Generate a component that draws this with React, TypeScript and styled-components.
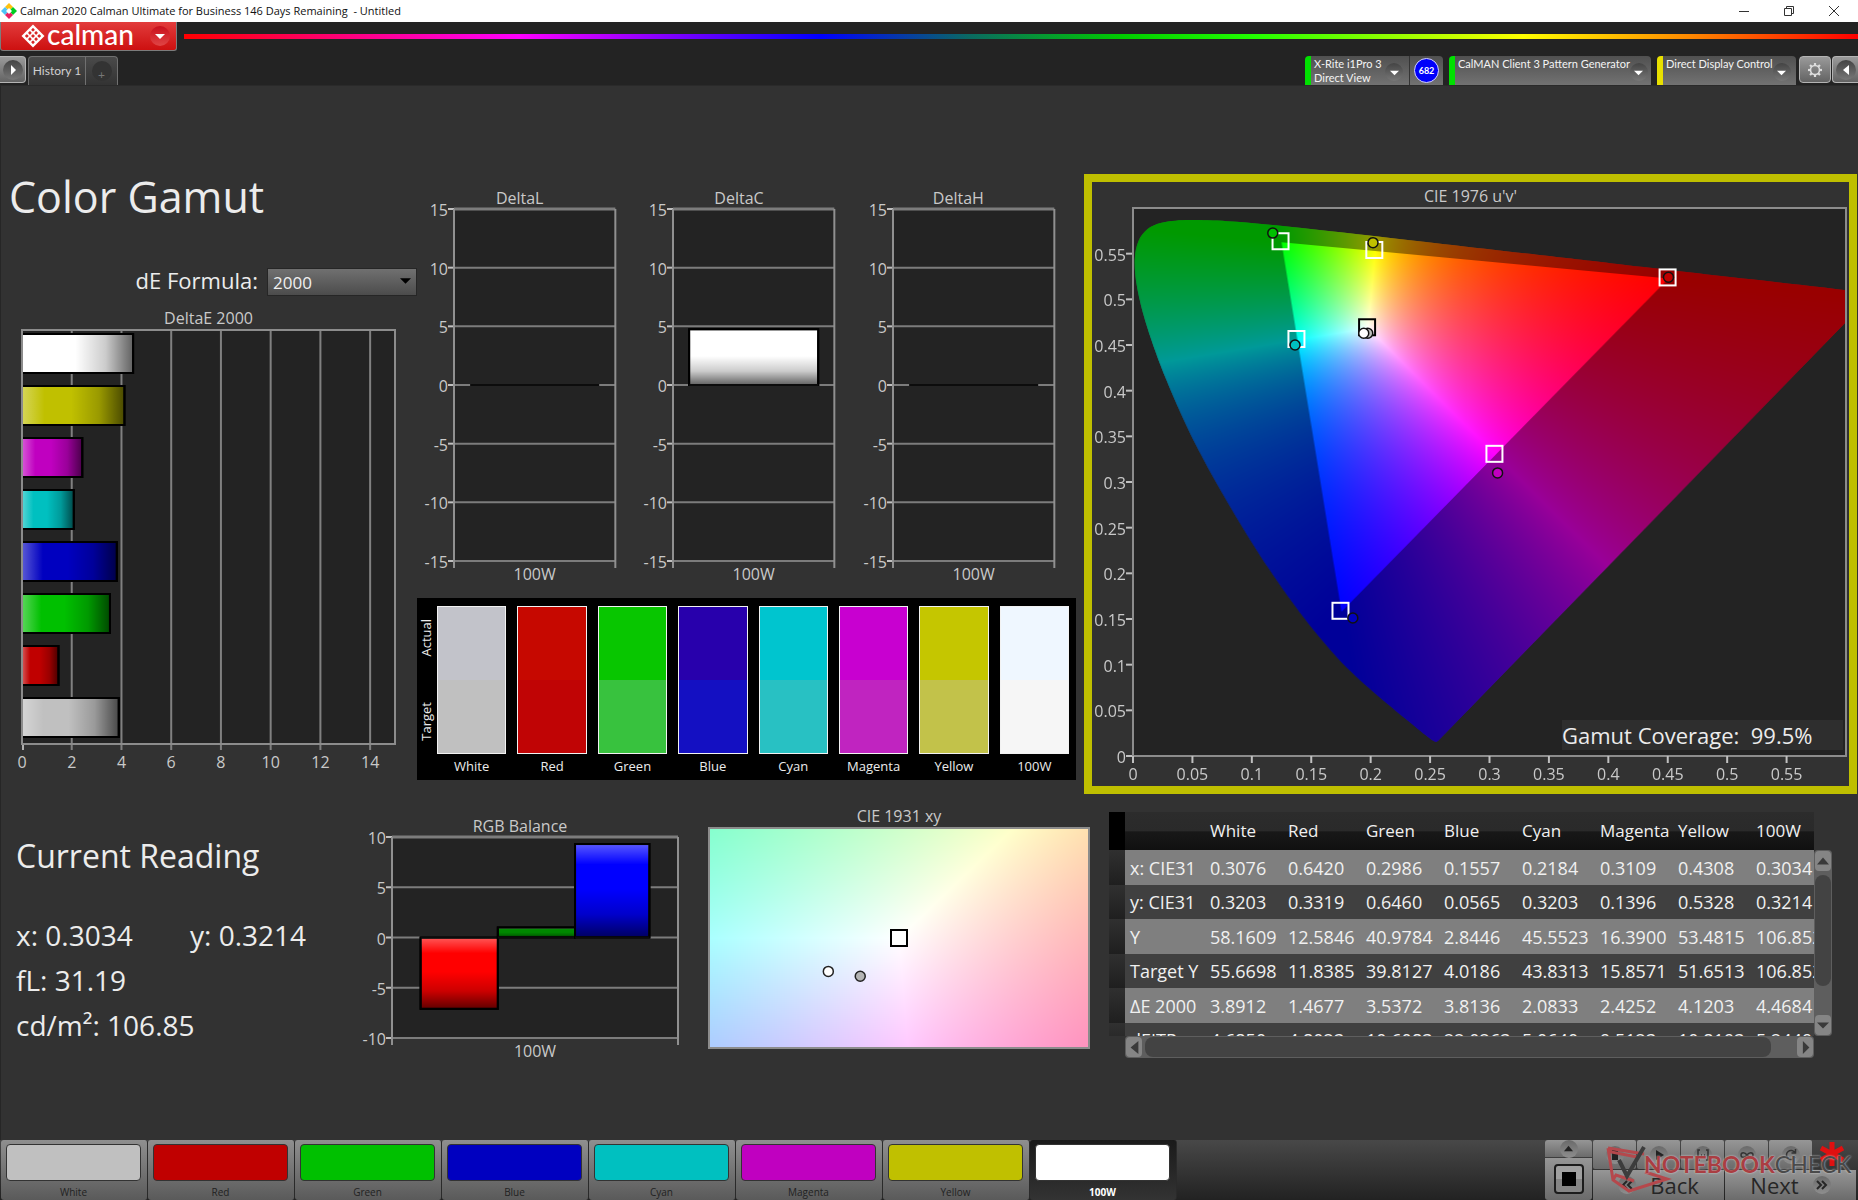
import React, { useEffect, useRef } from "react";
import styled, { createGlobalStyle, css } from "styled-components";

const sans = `"Open Sans", "Noto Sans", sans-serif`;
const ui = `Lato, "Open Sans", sans-serif`;

const GlobalStyle = createGlobalStyle`
  *, *::before, *::after { box-sizing: border-box; }
  body { margin: 0; background: #232323; color: #ececec; font-family: ${sans}; }
  button, select, input { font-family: inherit; }
  button { padding: 0; margin: 0; border: 0; cursor: pointer; }
`;

/* ---------- colour maths ---------- */

type Pt = [number, number];

const toUv = ([x, y]: Pt): Pt => {
  const d = -2 * x + 12 * y + 3;
  return [(4 * x) / d, (9 * y) / d];
};
const toXy = ([u, v]: Pt): Pt => {
  const d = 6 * u - 16 * v + 12;
  return [(9 * u) / d, (4 * v) / d];
};

const xyToRgb = ([x, y]: Pt): [number, number, number] => {
  const X = x / Math.max(y, 0.0001);
  const Z = (1 - x - y) / Math.max(y, 0.0001);
  const r = Math.max(0, 3.2406 * X - 1.5372 - 0.4986 * Z);
  const g = Math.max(0, -0.9689 * X + 1.8758 + 0.0415 * Z);
  const b = Math.max(0, 0.0557 * X - 0.204 + 1.057 * Z);
  const m = Math.max(r, g, b, 0.0001) / 255;
  return [r / m, g / m, b / m];
};

const locus: Pt[] = [
  [0.1741, 0.005], [0.1714, 0.0051], [0.1644, 0.0109], [0.1566, 0.0177], [0.144, 0.0297],
  [0.1355, 0.0399], [0.1241, 0.0578], [0.1096, 0.0868], [0.0913, 0.1327], [0.0687, 0.2007],
  [0.0454, 0.295], [0.0235, 0.4127], [0.0082, 0.5384], [0.0039, 0.6548], [0.0139, 0.7502],
  [0.0389, 0.812], [0.0743, 0.8338], [0.1142, 0.8262], [0.1547, 0.8059], [0.2296, 0.7543],
  [0.3016, 0.6923], [0.3731, 0.6245], [0.4441, 0.5547], [0.5125, 0.4866], [0.5752, 0.4242],
  [0.627, 0.3725], [0.6915, 0.3083], [0.7347, 0.2653],
];

const primaries: Pt[] = [[0.64, 0.33], [0.3, 0.6], [0.15, 0.06]];

const field = (w: number, h: number, at: (fx: number, fy: number) => Pt) => {
  const c = document.createElement("canvas");
  c.width = w;
  c.height = h;
  const ctx = c.getContext("2d")!;
  const img = ctx.createImageData(w, h);
  for (let j = 0; j < h; j++) {
    for (let i = 0; i < w; i++) {
      const rgb = xyToRgb(at((i + 0.5) / w, 1 - (j + 0.5) / h));
      const o = (j * w + i) * 4;
      img.data[o] = rgb[0];
      img.data[o + 1] = rgb[1];
      img.data[o + 2] = rgb[2];
      img.data[o + 3] = 255;
    }
  }
  ctx.putImageData(img, 0, 0);
  return c;
};

/* ---------- title bar and ribbon ---------- */

const Page = styled.div`
  min-height: 100vh;
  display: flex;
  flex-direction: column;
  overflow: hidden;
`;

const TitleBar = styled.header`
  height: 22px;
  display: flex;
  align-items: center;
  gap: 3px;
  padding-left: 1px;
  background: #fff;
  color: #111;
  font: 11px/22px ${sans};
  white-space: pre;
`;

const WindowButtons = styled.div`
  margin-left: auto;
  padding-right: 2px;
  display: flex;
`;

const WindowButton = styled.button`
  width: 45px;
  height: 22px;
  background: transparent;
  display: grid;
  place-items: center;
`;

const Brand = styled.div`
  display: flex;
  align-items: flex-start;
  gap: 7px;
  height: 34px;
`;

const BrandButton = styled.button`
  width: 177px;
  height: 29px;
  display: flex;
  align-items: center;
  padding: 0 6px 0 20px;
  gap: 2px;
  border: solid #7c7c7c;
  border-width: 0 1px 1px;
  border-radius: 0 0 3px 3px;
  background: linear-gradient(#e23c3c, #cd1010);
  color: #fff;
  font: 500 28px/22px ${ui};
`;

const BrandName = styled.span`
  height: 27px;
  flex: 1;
  text-align: left;
`;

const Spectrum = styled.div`
  flex: 1;
  height: 5px;
  margin-top: 12px;
  background: linear-gradient(90deg, #f00 0%, #f0f 20%, #00f 38%, #0a6a60 47%, #0c0 56%, #2f0 64%, #ff0 80%, #f80 90%, #f00 100%);
`;

const TabStrip = styled.nav`
  height: 29px;
  display: flex;
  align-items: stretch;
`;

const Tabs = styled.div`
  display: flex;
  margin-left: 2px;
`;

const Round = styled.span<{ $size: number; $dim?: boolean }>`
  width: ${(p) => p.$size}px;
  height: ${(p) => p.$size}px;
  flex: none;
  border-radius: 50%;
  display: grid;
  place-items: center;
  color: ${(p) => (p.$dim ? "#777" : "#fff")};
  background: ${(p) => (p.$dim ? "#333" : "linear-gradient(#444, #777)")};
`;

const RedRound = styled(Round)`
  background: linear-gradient(#c80f1c, #e04545);
`;

const SideButton = styled.button<{ $edge: "left" | "right" | "none" }>`
  width: ${(p) => (p.$edge === "none" ? 32 : 26)}px;
  height: 27px;
  display: flex;
  align-items: center;
  justify-content: center;
  border: 1px solid #b4b4b4;
  border-radius: ${(p) => (p.$edge === "left" ? "0 4px 4px 0" : p.$edge === "right" ? "4px 0 0 4px" : "4px")};
  ${(p) => p.$edge === "left" && css`border-left: 0;`}
  ${(p) => p.$edge === "right" && css`border-right: 0;`}
  background: linear-gradient(#9a9a9a, #636363);
`;

const Tab = styled.button<{ $w: number; $last?: boolean }>`
  width: ${(p) => p.$w}px;
  border: solid #707070;
  border-width: 1px 1px 0 ${(p) => (p.$last ? 0 : 1)}px;
  border-radius: ${(p) => (p.$last ? "0 4px 0 0" : "4px 0 0 0")};
  background: linear-gradient(#4a4a4a, #333);
  color: #d0d0d0;
  font: 12px/28px ${ui};
  display: grid;
  place-items: center;
`;

const Devices = styled.div`
  margin-left: auto;
  display: flex;
  gap: 6px;
`;

const Device = styled.div<{ $w: number; $mark: string }>`
  width: ${(p) => p.$w}px;
  display: flex;
  align-items: center;
  border-left: 6px solid ${(p) => p.$mark};
  border-radius: 4px 4px 0 0;
  background: linear-gradient(#505050, #727272);
  font: 11px/14px ${ui};
  color: #f4f4f4;
`;

const DeviceName = styled.span`
  flex: 1;
  align-self: flex-start;
  padding: 1px 0 0 3px;
  white-space: nowrap;
`;

const DeviceMenu = styled.button`
  align-self: flex-end;
  margin: 0 6px 4px 0;
  background: none;
  border-radius: 50%;
`;

const MeterCell = styled.span`
  height: 100%;
  width: 34px;
  display: grid;
  place-items: center;
  border-left: 1px solid #333;
`;

const Meter = styled.span`
  width: 25px;
  height: 25px;
  border-radius: 50%;
  border: 1px solid #d5d5ff;
  background: #0000fa;
  color: #fff;
  font: 700 9px/23px ${ui};
  text-align: center;
`;

const EndButtons = styled.div`
  display: flex;
  gap: 1px;
  margin-left: -3px;
`;

/* ---------- workspace ---------- */

const Workspace = styled.main`
  flex: 1;
  background: #323232;
  border-left: 1px solid #262626;
  border-top: 1px solid #2a2a2a;
  padding: 88px 1px 0 0;
`;

const Upper = styled.section`
  display: grid;
  grid-template-columns: minmax(0, 416fr) minmax(0, 667fr) minmax(0, 773fr);
  margin-bottom: 12px;
`;

const Lower = styled.section`
  display: grid;
  grid-template-columns: minmax(0, 361fr) minmax(0, 316fr) minmax(0, 411fr) minmax(0, 768fr);
  align-items: start;
`;

const Heading = styled.h1`
  margin: 0;
  padding-left: 8px;
  font: 400 43px/46px ${sans};
`;

const FormulaRow = styled.div`
  display: flex;
  align-items: center;
  justify-content: flex-end;
  gap: 9px;
  margin-top: 46px;
  font-size: 22px;
  line-height: 28px;
`;

const SelectBox = styled.span`
  position: relative;
  display: block;
  width: 150px;
  height: 28px;
  svg { position: absolute; right: 6px; top: 9px; pointer-events: none; }
`;

const Select = styled.select`
  width: 100%;
  height: 100%;
  appearance: none;
  border: 1px solid #262626;
  border-radius: 0;
  padding: 2px 5px 0;
  background: linear-gradient(#707070, #4c4c4c);
  color: #f0f0f0;
  font-size: 17px;
`;

const ChartTitle = styled.h2`
  margin: 0;
  font: 400 16px/20px ${sans};
  color: #c9c9c9;
  text-align: center;
`;

const ChartBody = styled.div`
  padding-top: 2px;
`;

const Plot = styled.svg`
  display: block;
  width: 100%;
  overflow: visible;
  font: 16px ${sans};
  fill: #c9c9c9;
`;

const DeltaEBox = styled.figure`
  margin: 14px 22px 0 21px;
`;

const DeltaRow = styled.div`
  display: flex;
  gap: 28px;
  padding: 14px 30px 0 7px;
`;

const ColumnChart = styled.figure`
  flex: 1;
  min-width: 0;
  margin: 0;
`;

const AxisPad = styled.div<{ $h: number }>`
  padding: 1px 0 0 30px;
  height: ${(p) => p.$h}px;
`;

const SwatchPanel = styled.div`
  margin: 13px 8px 0 0;
  height: 182px;
  display: flex;
  gap: 11px;
  padding: 8px 7px 4px 2px;
  background: #000;
  font-size: 13px;
  line-height: 16px;
`;

const SideLabels = styled.div`
  width: 14px;
  margin-right: -7px;
  height: 148px;
  padding: 13px 0;
  display: flex;
  flex-direction: column;
  justify-content: space-between;
  align-items: center;
`;

const SideLabel = styled.span`
  writing-mode: vertical-rl;
  transform: rotate(180deg);
`;

const SwatchCell = styled.div`
  flex: 1;
  text-align: center;
`;

const Swatch = styled.div<{ $actual: string; $target: string }>`
  height: 148px;
  margin-bottom: 4px;
  border: 1px solid #f2f2f2;
  background: linear-gradient(${(p) => p.$actual} 50%, ${(p) => p.$target} 50%);
`;

const GamutPanel = styled.figure`
  margin: 0;
  height: 620px;
  border: 8px solid #bfbf00;
  padding: 4px 3px 0 41px;
`;

const GamutTitle = styled(ChartTitle)`
  padding-right: 38px;
`;

const Stage = styled.div<{ $h: number }>`
  position: relative;
  height: ${(p) => p.$h}px;
  background: #232323;
  canvas { display: block; width: 100%; height: 100%; }
  svg { position: absolute; inset: 0; height: 100%; }
`;

const Coverage = styled.output`
  position: absolute;
  right: 3px;
  bottom: 6px;
  width: 281px;
  height: 30px;
  background: #2e2e2e;
  font-size: 22px;
  line-height: 30px;
  white-space: pre;
`;

const Reading = styled.section`
  padding: 28px 0 0 15px;
  font-size: 28px;
  line-height: 45px;
`;

const ReadingTitle = styled.h2`
  margin: 0 0 35px;
  font: 400 32px/44px ${sans};
`;

const ReadingRow = styled.div`
  display: grid;
  grid-template-columns: 174px 1fr;
`;

const Balance = styled(ColumnChart)`
  padding-top: 10px;
`;

const WhitePoint = styled.figure`
  margin: 0 0 0 31px;
`;

/* ---------- readings table ---------- */

const GridBox = styled.div`
  margin: 6px 25px 0 20px;
  display: grid;
  grid-template-columns: minmax(0, 1fr) 18px;
`;

const TableClip = styled.div`
  height: 224px;
  overflow: hidden;
`;

const Table = styled.table`
  table-layout: fixed;
  width: 725px;
  border-collapse: collapse;
  font-size: 18px;
  line-height: 24px;
  th, td { padding: 0; text-align: left; font-weight: 400; white-space: nowrap; color: #f0f0f0; }
  thead th { height: 38px; font-size: 17px; background: linear-gradient(#2c2c2c, #2a2a2a 50%, #181818 52%, #101010); }
  thead th:first-child { background: #000; }
  tbody th { padding-left: 5px; }
`;

const Row = styled.tr<{ $light: boolean }>`
  height: ${(p) => (p.$light ? 35 : 34)}px;
  background: ${(p) => (p.$light ? "#7f7f7f" : "#404040")};
  td:first-child { background: linear-gradient(#303030, #1f1f1f); }
`;

const VScroll = styled.div`
  margin-top: 38px;
  height: 186px;
  padding: 1px;
  border-radius: 4px;
  background: #5e5e5e;
  display: flex;
  flex-direction: column;
  gap: 4px;
`;

const HScroll = styled.div`
  margin-left: 16px;
  height: 22px;
  padding: 1px;
  border-radius: 4px;
  background: #5e5e5e;
  display: flex;
  gap: 3px;
`;

const Thumb = styled.div<{ $grow: number }>`
  flex: ${(p) => p.$grow};
  border-radius: 8px;
  background: #434343;
`;

const Rest = styled.div<{ $grow: number }>`
  flex: ${(p) => p.$grow};
`;

const ScrollButton = styled.button`
  flex: none;
  width: 16px;
  height: 20px;
  border-radius: 4px;
  background: #858585;
  display: grid;
  place-items: center;
`;

/* ---------- bottom bar ---------- */

const Footer = styled.footer`
  height: 60px;
  display: flex;
  background: linear-gradient(#484848, #222);
  position: relative;
  padding: 0 2px 0 1px;
`;

const PatternButton = styled.button<{ $active: boolean }>`
  width: 147px;
  height: 60px;
  display: flex;
  flex-direction: column;
  justify-content: space-between;
  padding: 4px 6px 1px 5px;
  border-right: 1px solid #2a2a2a;
  border-radius: 3px;
  background: ${(p) => (p.$active ? "linear-gradient(#1a1a1a, #333)" : "linear-gradient(#8f8f8f, #5a5a5a)")};
  color: ${(p) => (p.$active ? "#fff" : "#222")};
  font: ${(p) => (p.$active ? 700 : 400)} 10px/14px ${sans};
  text-align: center;
`;

const PatternColor = styled.span<{ $c: string }>`
  height: 37px;
  border: 1px solid #333;
  border-radius: 4px;
  background: ${(p) => p.$c};
`;

const Transport = styled.div`
  margin-left: auto;
  display: grid;
  grid-template-columns: 47px 263px;
  gap: 1px;
`;

const StopColumn = styled.div`
  display: grid;
  grid-template-rows: 17px 1fr;
  gap: 1px;
  border-radius: 3px;
  overflow: hidden;
`;

const Key = styled.button`
  background: linear-gradient(#969696, #6b6b6b);
  display: flex;
  align-items: center;
  justify-content: center;
  gap: 14px;
  color: #262626;
  font: 22px/28px ${sans};
`;

const SmallKey = styled(Key)`
  border-radius: 2px;
`;

const StopFace = styled.span`
  width: 30px;
  height: 30px;
  border: 2px solid #1c1c1c;
  border-radius: 4px;
  background: linear-gradient(#a0a0a0 50%, #858585 50%);
  display: grid;
  place-items: center;
`;

const Keys = styled.div`
  display: grid;
  grid-template-rows: 29px 30px;
  gap: 1px;
`;

const SmallKeys = styled.div`
  display: grid;
  grid-template-columns: repeat(5, 43px);
  gap: 1px;
`;

const BigKeys = styled.div`
  display: grid;
  grid-template-columns: 1fr 1fr;
  gap: 1px;
`;

const KeyDot = styled.span`
  width: 18px;
  height: 18px;
  border-radius: 50%;
  display: grid;
  place-items: center;
  background: linear-gradient(#6a6a6a, #8e8e8e);
`;

const Watermark = styled.div`
  position: absolute;
  right: 6px;
  top: 2px;
  width: 248px;
  height: 52px;
  pointer-events: none;
  svg { position: absolute; left: 0; top: 0; overflow: visible; }
`;

const WatermarkText = styled.span`
  position: absolute;
  left: 40px;
  top: 8px;
  font: 700 23px/28px ${ui};
  color: #aa3e42;
  text-shadow: 0 0 2px #ddd;
`;

const WatermarkTail = styled.span`
  color: #4a4a4a;
  font-weight: 500;
`;

/* ---------- pieces ---------- */

const Caret = ({ dir, size = 10, fill = "#fff" }: { dir: "up" | "down" | "left" | "right"; size?: number; fill?: string }) => {
  const d = { down: "M0 3h10L5 8z", up: "M0 8h10L5 2z", left: "M8 0v10L2 5z", right: "M3 0v10l5-5z" }[dir];
  return (
    <svg width={size} height={size} viewBox="0 0 10 10" aria-hidden="true">
      <path d={d} fill={fill} />
    </svg>
  );
};

const AppIcon = () => (
  <svg width="16" height="16" viewBox="0 0 16 16" aria-hidden="true">
    <path d="M8 0l4 4-4 4-4-4z" fill="#ffc20e" />
    <path d="M4 4l4 4-4 4-4-4z" fill="#4fc3f7" />
    <path d="M12 4l4 4-4 4-4-4z" fill="#0c2" />
    <path d="M8 8l4 4-4 4-4-4z" fill="#e91e63" />
    <path d="M8 5l3 3-3 3-3-3z" fill="#fff" />
  </svg>
);

const BrandMark = () => (
  <svg width="24" height="24" viewBox="0 0 24 24" aria-hidden="true">
    <path d="M12 .5L23.5 12 12 23.5.5 12z" fill="#fff" />
    <g fill="#d82626">
      {[-1, 0, 1].map((a) =>
        [-1, 0, 1].map((b) => {
          const x = 12 + (a - b) * 3.1;
          const y = 12 + (a + b) * 3.1;
          return <rect key={`${a}${b}`} x={x - 1.4} y={y - 1.4} width="2.8" height="2.8" rx=".6" transform={`rotate(45 ${x} ${y})`} />;
        })
      )}
    </g>
  </svg>
);

const Gear = () => (
  <svg width="16" height="16" viewBox="0 0 16 16" fill="none" stroke="#ddd" aria-hidden="true">
    <circle cx="8" cy="8" r="4.5" strokeWidth="1.6" />
    {[0, 45, 90, 135, 180, 225, 270, 315].map((r) => (
      <path key={r} d="M8 1v2.5" strokeWidth="2.2" transform={`rotate(${r} 8 8)`} />
    ))}
  </svg>
);

const keyIcons: [string, React.ReactNode][] = [
  ["Stop reading", <rect key="i" x="4" y="2" width="6" height="10" fill="#222" stroke="none" />],
  ["Play", <path key="i" d="M4 2v10l8-5z" fill="#222" stroke="none" />],
  ["Read series", <path key="i" d="M4 2H2v10h2M10 2h2v10h-2M5 7h1M8 7h1" />],
  ["Read continuous", <path key="i" d="M7 7C5 4 1 4 1 7s4 3 6 0 6-3 6 0-4 3-6 0z" />],
  ["Refresh", <path key="i" d="M11 9a4.5 4.5 0 1 1 0-4M11.500 1v4h-4" />],
];

const Chevrons = ({ flip }: { flip?: boolean }) => (
  <svg width="12" height="12" fill="none" stroke="#262626" strokeWidth="2" aria-hidden="true">
    <path d={flip ? "M6 2L2 6l4 4M11 2L7 6l4 4" : "M1 2l4 4-4 4M6 2l4 4-4 4"} />
  </svg>
);

const Shade = ({ id, vertical }: { id: string; vertical?: boolean }) => (
  <linearGradient id={id} x1="0" y1="0" x2={vertical ? 0 : 1} y2={vertical ? 1 : 0}>
    <stop offset="0" stopColor="#fff" stopOpacity=".35" />
    <stop offset=".22" stopColor="#fff" stopOpacity="0" />
    <stop offset=".48" stopColor="#000" stopOpacity="0" />
    <stop offset=".75" stopColor="#000" stopOpacity=".2" />
    <stop offset="1" stopColor="#000" stopOpacity=".62" />
  </linearGradient>
);

const deltaE: [string, number][] = [
  ["#ffffff", 4.4684], ["#c0c000", 4.1203], ["#c000c0", 2.4252], ["#00c0c0", 2.0833],
  ["#0000c0", 3.8136], ["#00c000", 3.5372], ["#c00000", 1.4677], ["#c0c0c0", 3.8912],
];

const DeltaEChart = () => {
  const pct = (v: number) => `${(v / 15) * 100}%`;
  return (
    <Plot height={414} role="img" aria-label="DeltaE 2000">
      <defs><Shade id="shade-h" /></defs>
      <rect width="100%" height="414" fill="#232323" />
      {[2, 4, 6, 8, 10, 12, 14].map((v) => (
        <line key={v} x1={pct(v)} x2={pct(v)} y1="0" y2="420" stroke="#808080" strokeWidth="2" />
      ))}
      <line x1="1" x2="1" y1="414" y2="420" stroke="#b0b0b0" strokeWidth="2" />
      {deltaE.map(([c, v], i) => (
        <g key={c} stroke="#000" strokeWidth="2">
          <rect x="0" y={4 + i * 52} width={pct(v)} height="39" fill={c} />
          <rect x="0" y={4 + i * 52} width={pct(v)} height="39" fill="url(#shade-h)" />
        </g>
      ))}
      <rect x="0" y="0" width="100%" height="414" fill="none" stroke="#8c8c8c" strokeWidth="2" />
      {[0, 2, 4, 6, 8, 10, 12, 14].map((v) => (
        <text key={v} x={pct(v)} y="438" textAnchor="middle">{v}</text>
      ))}
    </Plot>
  );
};

type Bar = { x: number; w: number; v: number; c: string };

const Columns = ({ height, max, step, bars, id }: { height: number; max: number; step: number; bars: Bar[]; id: string }) => {
  const y = (v: number) => ((max - v) / (2 * max)) * height;
  const ticks: number[] = [];
  for (let v = max; v >= -max; v -= step) ticks.push(v);
  return (
    <Plot height={height} role="img">
      <defs><Shade id={id} vertical /></defs>
      <rect width="100%" height={height} fill="#232323" />
      {ticks.map((v) => (
        <g key={v}>
          <line x1="-6" x2="0" y1={y(v)} y2={y(v)} stroke="#c0c0c0" strokeWidth="2" />
          <line x1="0" x2="100%" y1={y(v)} y2={y(v)} stroke="#7c7c7c" strokeWidth={v === max ? 3 : 2} />
          <text x="-6" y={y(v) + 7} textAnchor="end">{v}</text>
        </g>
      ))}
      <line x1="0" x2="0" y1="0" y2={height + 7} stroke="#909090" strokeWidth="2" />
      <line x1="100%" x2="100%" y1="0" y2={height + 7} stroke="#909090" strokeWidth="2" />
      {bars.map((b) => {
        const top = Math.min(y(b.v), y(0));
        const h = Math.abs(y(b.v) - y(0));
        return (
          <g key={b.c} stroke="#000" strokeWidth="2">
            <rect x={`${b.x}%`} width={`${b.w}%`} y={top} height={h} fill={b.c} />
            <rect x={`${b.x}%`} width={`${b.w}%`} y={top} height={h} fill={`url(#${id})`} />
            <line x1={`${b.x}%`} x2={`${b.x + b.w}%`} y1={y(0)} y2={y(0)} stroke="#0c0c0c" />
          </g>
        );
      })}
      <text x="50%" y={height + 19} textAnchor="middle">100W</text>
    </Plot>
  );
};

const measured: [string, Pt][] = [
  ["#c0c0c0", [0.3076, 0.3203]], ["#c00000", [0.642, 0.3319]], ["#00c000", [0.2986, 0.646]],
  ["#0000c0", [0.1557, 0.0565]], ["#00c0c0", [0.2184, 0.3203]], ["#c000c0", [0.3109, 0.1396]],
  ["#c0c000", [0.4308, 0.5328]], ["#ffffff", [0.3034, 0.3214]],
];

const targets: Pt[] = [
  [0.64, 0.33], [0.3, 0.6], [0.15, 0.06], [0.2247, 0.3287], [0.3209, 0.1542], [0.4193, 0.5053],
];

const GamutChart = () => {
  const ref = useRef<HTMLCanvasElement>(null);
  useEffect(() => {
    const c = ref.current!;
    const { width: w, height: h } = c;
    const ctx = c.getContext("2d")!;
    const px = (p: Pt): Pt => {
      const [u, v] = toUv(p);
      return [(u / 0.6) * w, (1 - v / 0.6) * h];
    };
    const trace = (pts: Pt[]) => {
      pts.map(px).forEach(([x, y], i) => (i ? ctx.lineTo(x, y) : ctx.moveTo(x, y)));
      ctx.closePath();
    };
    const smooth = () => {
      const q = locus.map(px);
      ctx.moveTo(q[0][0], q[0][1]);
      for (let i = 0; i < q.length - 1; i++) {
        const a = q[Math.max(0, i - 1)], b = q[i], d = q[i + 1], e = q[Math.min(q.length - 1, i + 2)];
        ctx.bezierCurveTo(b[0] + (d[0] - a[0]) / 6, b[1] + (d[1] - a[1]) / 6, d[0] - (e[0] - b[0]) / 6, d[1] - (e[1] - b[1]) / 6, d[0], d[1]);
      }
      ctx.closePath();
    };
    ctx.clearRect(0, 0, w, h);
    ctx.save();
    ctx.beginPath();
    smooth();
    ctx.clip();
    ctx.drawImage(field(w, h, (fx, fy) => toXy([fx * 0.6, fy * 0.6])), 0, 0);
    ctx.beginPath();
    ctx.rect(0, 0, w, h);
    trace(primaries);
    ctx.fillStyle = "rgba(0,0,0,.4)";
    ctx.fill("evenodd");
    ctx.restore();
  }, []);
  const at = (p: Pt) => {
    const [u, v] = toUv(p);
    return { x: `${(u / 0.6) * 100}%`, y: `${(1 - v / 0.6) * 100}%` };
  };
  const steps = Array.from({ length: 12 }, (_, i) => i * 0.05);
  return (
    <Stage $h={548}>
      <canvas ref={ref} width={711} height={548} />
      <Plot role="img" aria-label="CIE 1976 u'v'">
        <rect width="100%" height="100%" fill="none" stroke="#8c8c8c" strokeWidth="2" />
        {steps.map((s) => {
          const p = `${(s / 0.6) * 100}%`;
          const q = `${(1 - s / 0.6) * 100}%`;
          const name = String(Math.round(s * 100) / 100);
          return (
            <g key={name}>
              <line x1="-7" x2="-1" y1={q} y2={q} stroke="#c0c0c0" strokeWidth="2" />
              <text x="-7" y={q} dy="7" textAnchor="end">{name}</text>
              <svg x={p} y="100%" overflow="visible">
                <line x1="0" x2="0" y1="0" y2="7" stroke="#c0c0c0" strokeWidth="2" />
                <text x="0" y="24" textAnchor="middle">{name}</text>
              </svg>
            </g>
          );
        })}
        {targets.map((t) => (
          <svg key={t.join()} {...at(t)} overflow="visible">
            <rect x="-9" y="-9" width="16" height="16" fill="none" stroke="#fff" strokeWidth="2" />
          </svg>
        ))}
        <svg {...at([0.3127, 0.329])} overflow="visible">
          <rect x="-9" y="-9" width="16" height="16" fill="none" stroke="#000" strokeWidth="2" />
        </svg>
        {measured.map(([c, p]) => {
          const { x, y } = at(p);
          return <circle key={c} cx={x} cy={y} r="5" fill={c} stroke="#111" strokeWidth="1.5" />;
        })}
      </Plot>
      <Coverage>{"Gamut Coverage:  99.5%"}</Coverage>
    </Stage>
  );
};

const WhitePointChart = () => {
  const ref = useRef<HTMLCanvasElement>(null);
  useEffect(() => {
    const c = ref.current!;
    c.getContext("2d")!.drawImage(
      field(c.width, c.height, (fx, fy) => [0.2877 + fx * 0.05, 0.304 + fy * 0.05]), 0, 0);
  }, []);
  const at = ([x, y]: Pt) => ({ cx: `${((x - 0.2877) / 0.05) * 100}%`, cy: `${(1 - (y - 0.304) / 0.05) * 100}%` });
  return (
    <Stage $h={220}>
      <canvas ref={ref} width={380} height={220} />
      <Plot role="img" aria-label="CIE 1931 xy">
        <rect width="100%" height="100%" fill="none" stroke="#8c8c8c" strokeWidth="2" />
        <svg x="50%" y="50%" overflow="visible">
          <rect x="-8" y="-8" width="16" height="16" fill="#fff" stroke="#000" strokeWidth="2" />
        </svg>
        <circle {...at([0.3034, 0.3214])} r="5" fill="#fff" stroke="#222" strokeWidth="1.5" />
        <circle {...at([0.3076, 0.3203])} r="5" fill="#b4b4b4" stroke="#222" strokeWidth="1.5" />
      </Plot>
    </Stage>
  );
};

const names = ["White", "Red", "Green", "Blue", "Cyan", "Magenta", "Yellow", "100W"];
const swatches: [string, string][] = [
  ["#c2c3ca", "#c0c0c0"], ["#c60800", "#c00405"], ["#08c600", "#38c23e"], ["#2800ac", "#1410c2"],
  ["#00c5cf", "#28c1c3"], ["#c800d0", "#c024c0"], ["#c5c600", "#c2c24a"], ["#eff7ff", "#f6f6f6"],
];
const patternColors = ["#c0c0c0", "#c00000", "#00c000", "#0000c0", "#00c0c0", "#c000c0", "#c0c000", "#ffffff"];

const rows: [string, string[]][] = [
  ["x: CIE31", ["0.3076", "0.6420", "0.2986", "0.1557", "0.2184", "0.3109", "0.4308", "0.3034"]],
  ["y: CIE31", ["0.3203", "0.3319", "0.6460", "0.0565", "0.3203", "0.1396", "0.5328", "0.3214"]],
  ["Y", ["58.1609", "12.5846", "40.9784", "2.8446", "45.5523", "16.3900", "53.4815", "106.8528"]],
  ["Target Y", ["55.6698", "11.8385", "39.8127", "4.0186", "43.8313", "15.8571", "51.6513", "106.8528"]],
  ["ΔE 2000", ["3.8912", "1.4677", "3.5372", "3.8136", "2.0833", "2.4252", "4.1203", "4.4684"]],
  ["dEITP", ["4.6850", "4.8023", "10.6083", "22.0263", "5.0640", "9.5123", "10.8193", "5.2449"]],
];

export default function App() {
  return (
    <Page>
      <GlobalStyle />
      <TitleBar>
        <AppIcon />
        <span>{"Calman 2020 Calman Ultimate for Business 146 Days Remaining  - Untitled"}</span>
        <WindowButtons>
          <WindowButton aria-label="Minimize">
            <svg width="10" height="10"><path d="M0 5.5h10" stroke="#333" /></svg>
          </WindowButton>
          <WindowButton aria-label="Restore">
            <svg width="10" height="10" fill="none" stroke="#333"><path d="M.5 2.5h7v7h-7zM2.5 2.5v-2h7v7h-2" /></svg>
          </WindowButton>
          <WindowButton aria-label="Close">
            <svg width="10" height="10" stroke="#333"><path d="M0 0l10 10M10 0L0 10" /></svg>
          </WindowButton>
        </WindowButtons>
      </TitleBar>

      <Brand>
        <BrandButton>
          <BrandMark />
          <BrandName>calman</BrandName>
          <RedRound $size={20}><Caret dir="down" /></RedRound>
        </BrandButton>
        <Spectrum />
      </Brand>

      <TabStrip>
        <SideButton $edge="left" aria-label="Expand left panel"><Round $size={20}><Caret dir="right" /></Round></SideButton>
        <Tabs>
          <Tab $w={58}>History 1</Tab>
          <Tab $w={32} $last aria-label="Add tab"><Round $size={20} $dim>+</Round></Tab>
        </Tabs>
        <Devices>
          <Device $w={138} $mark="#00e000">
            <DeviceName>X-Rite i1Pro 3<br />Direct View</DeviceName>
            <DeviceMenu aria-label="Meter menu"><Round $size={18}><Caret dir="down" size={9} /></Round></DeviceMenu>
            <MeterCell><Meter>682</Meter></MeterCell>
          </Device>
          <Device $w={202} $mark="#00e000">
            <DeviceName>CalMAN Client 3 Pattern Generator</DeviceName>
            <DeviceMenu aria-label="Source menu"><Round $size={18}><Caret dir="down" size={9} /></Round></DeviceMenu>
          </Device>
          <Device $w={139} $mark="#e8e000">
            <DeviceName>Direct Display Control</DeviceName>
            <DeviceMenu aria-label="Display menu"><Round $size={18}><Caret dir="down" size={9} /></Round></DeviceMenu>
          </Device>
          <EndButtons>
            <SideButton $edge="none" aria-label="Settings"><Gear /></SideButton>
            <SideButton $edge="right" aria-label="Expand right panel"><Round $size={20}><Caret dir="left" /></Round></SideButton>
          </EndButtons>
        </Devices>
      </TabStrip>

      <Workspace>
        <Upper>
          <div>
            <Heading>Color Gamut</Heading>
            <FormulaRow>
              <label htmlFor="formula">dE Formula:</label>
              <SelectBox>
                <Select id="formula" defaultValue="2000"><option>2000</option></Select>
                <Caret dir="down" fill="#000" size={11} />
              </SelectBox>
            </FormulaRow>
            <DeltaEBox>
              <ChartTitle>DeltaE 2000</ChartTitle>
              <ChartBody><DeltaEChart /></ChartBody>
            </DeltaEBox>
          </div>

          <div>
            <DeltaRow>
              {([["DeltaL", 0], ["DeltaC", 4.75], ["DeltaH", 0]] as [string, number][]).map(([name, v]) => (
                <ColumnChart key={name}>
                  <ChartTitle>{name}</ChartTitle>
                  <AxisPad $h={377}>
                    <Columns id={`shade-${name}`} height={352} max={15} step={5} bars={[{ x: 10, w: 80, v, c: "#ffffff" }]} />
                  </AxisPad>
                </ColumnChart>
              ))}
            </DeltaRow>
            <SwatchPanel>
              <SideLabels><SideLabel>Actual</SideLabel><SideLabel>Target</SideLabel></SideLabels>
              {names.map((n, i) => (
                <SwatchCell key={n}>
                  <Swatch $actual={swatches[i][0]} $target={swatches[i][1]} />
                  {n}
                </SwatchCell>
              ))}
            </SwatchPanel>
          </div>

          <GamutPanel>
            <GamutTitle>CIE 1976 u'v'</GamutTitle>
            <ChartBody><GamutChart /></ChartBody>
          </GamutPanel>
        </Upper>

        <Lower>
          <Reading>
            <ReadingTitle>Current Reading</ReadingTitle>
            <ReadingRow><span>x: 0.3034</span><span>y: 0.3214</span></ReadingRow>
            <div>fL: 31.19</div>
            <div>cd/m²: 106.85</div>
          </Reading>
          <Balance>
            <ChartTitle>RGB Balance</ChartTitle>
            <AxisPad $h={230}>
              <Columns
                id="shade-rgb" height={201} max={10} step={5}
                bars={[
                  { x: 10, w: 27, v: -7.1, c: "#ff0000" },
                  { x: 37, w: 27, v: 1, c: "#008800" },
                  { x: 64, w: 26, v: 9.3, c: "#0000ff" },
                ]}
              />
            </AxisPad>
          </Balance>
          <WhitePoint>
            <ChartTitle>CIE 1931 xy</ChartTitle>
            <ChartBody><WhitePointChart /></ChartBody>
          </WhitePoint>
          <GridBox>
            <TableClip>
              <Table>
                <colgroup>
                  <col width="16" /><col width="85" />
                  {names.map((n) => <col key={n} width="78" />)}
                </colgroup>
                <thead>
                  <tr><th /><th />{names.map((n) => <th key={n} scope="col">{n}</th>)}</tr>
                </thead>
                <tbody>
                  {rows.map(([label, vals], i) => (
                    <Row key={label} $light={i % 2 === 0}>
                      <td />
                      <th scope="row">{label}</th>
                      {vals.map((v, k) => <td key={k}>{v}</td>)}
                    </Row>
                  ))}
                </tbody>
              </Table>
            </TableClip>
            <VScroll>
              <ScrollButton aria-label="Scroll up"><Caret dir="up" fill="#3a3a3a" size={12} /></ScrollButton>
              <Thumb $grow={116} /><Rest $grow={22} />
              <ScrollButton aria-label="Scroll down"><Caret dir="down" fill="#3a3a3a" size={12} /></ScrollButton>
            </VScroll>
            <HScroll>
              <ScrollButton aria-label="Scroll left"><Caret dir="left" fill="#3a3a3a" size={13} /></ScrollButton>
              <Thumb $grow={624} /><Rest $grow={20} />
              <ScrollButton aria-label="Scroll right"><Caret dir="right" fill="#3a3a3a" size={13} /></ScrollButton>
            </HScroll>
          </GridBox>
        </Lower>
      </Workspace>

      <Footer>
        {names.map((n, i) => (
          <PatternButton key={n} $active={i === 7}>
            <PatternColor $c={patternColors[i]} />
            {n}
          </PatternButton>
        ))}
        <Transport>
          <StopColumn>
            <Key aria-label="Raise"><KeyDot><Caret dir="up" fill="#222" size={9} /></KeyDot></Key>
            <Key aria-label="Stop"><StopFace><svg width="14" height="14"><rect width="14" height="14" /></svg></StopFace></Key>
          </StopColumn>
          <Keys>
            <SmallKeys>
              {keyIcons.map(([label, icon]) => (
                <SmallKey key={label} aria-label={label}>
                  <KeyDot><svg width="14" height="14" fill="none" stroke="#333" strokeWidth="1.5">{icon}</svg></KeyDot>
                </SmallKey>
              ))}
            </SmallKeys>
            <BigKeys>
              <Key><KeyDot><Chevrons flip /></KeyDot>Back</Key>
              <Key>Next<KeyDot><Chevrons /></KeyDot></Key>
            </BigKeys>
          </Keys>
        </Transport>
        <Watermark>
          <svg width="248" height="52" fill="none" aria-hidden="true">
            <path d="M4 6l36 6M4 6l5 32 16 11 38-12-22-7M4 6l3 4 26 5M9 38l3-5 18 6" stroke="#b5484c" strokeWidth="3" />
            <path d="M15 18l8 16L40 5" stroke="#3c3c3c" strokeWidth="4" />
            <path d="M228 0v24M217 6l22 12M239 6l-22 12" stroke="#e01010" strokeWidth="5" />
          </svg>
          <WatermarkText>NOTEBOOK<WatermarkTail>CHECK</WatermarkTail></WatermarkText>
        </Watermark>
      </Footer>
    </Page>
  );
}
